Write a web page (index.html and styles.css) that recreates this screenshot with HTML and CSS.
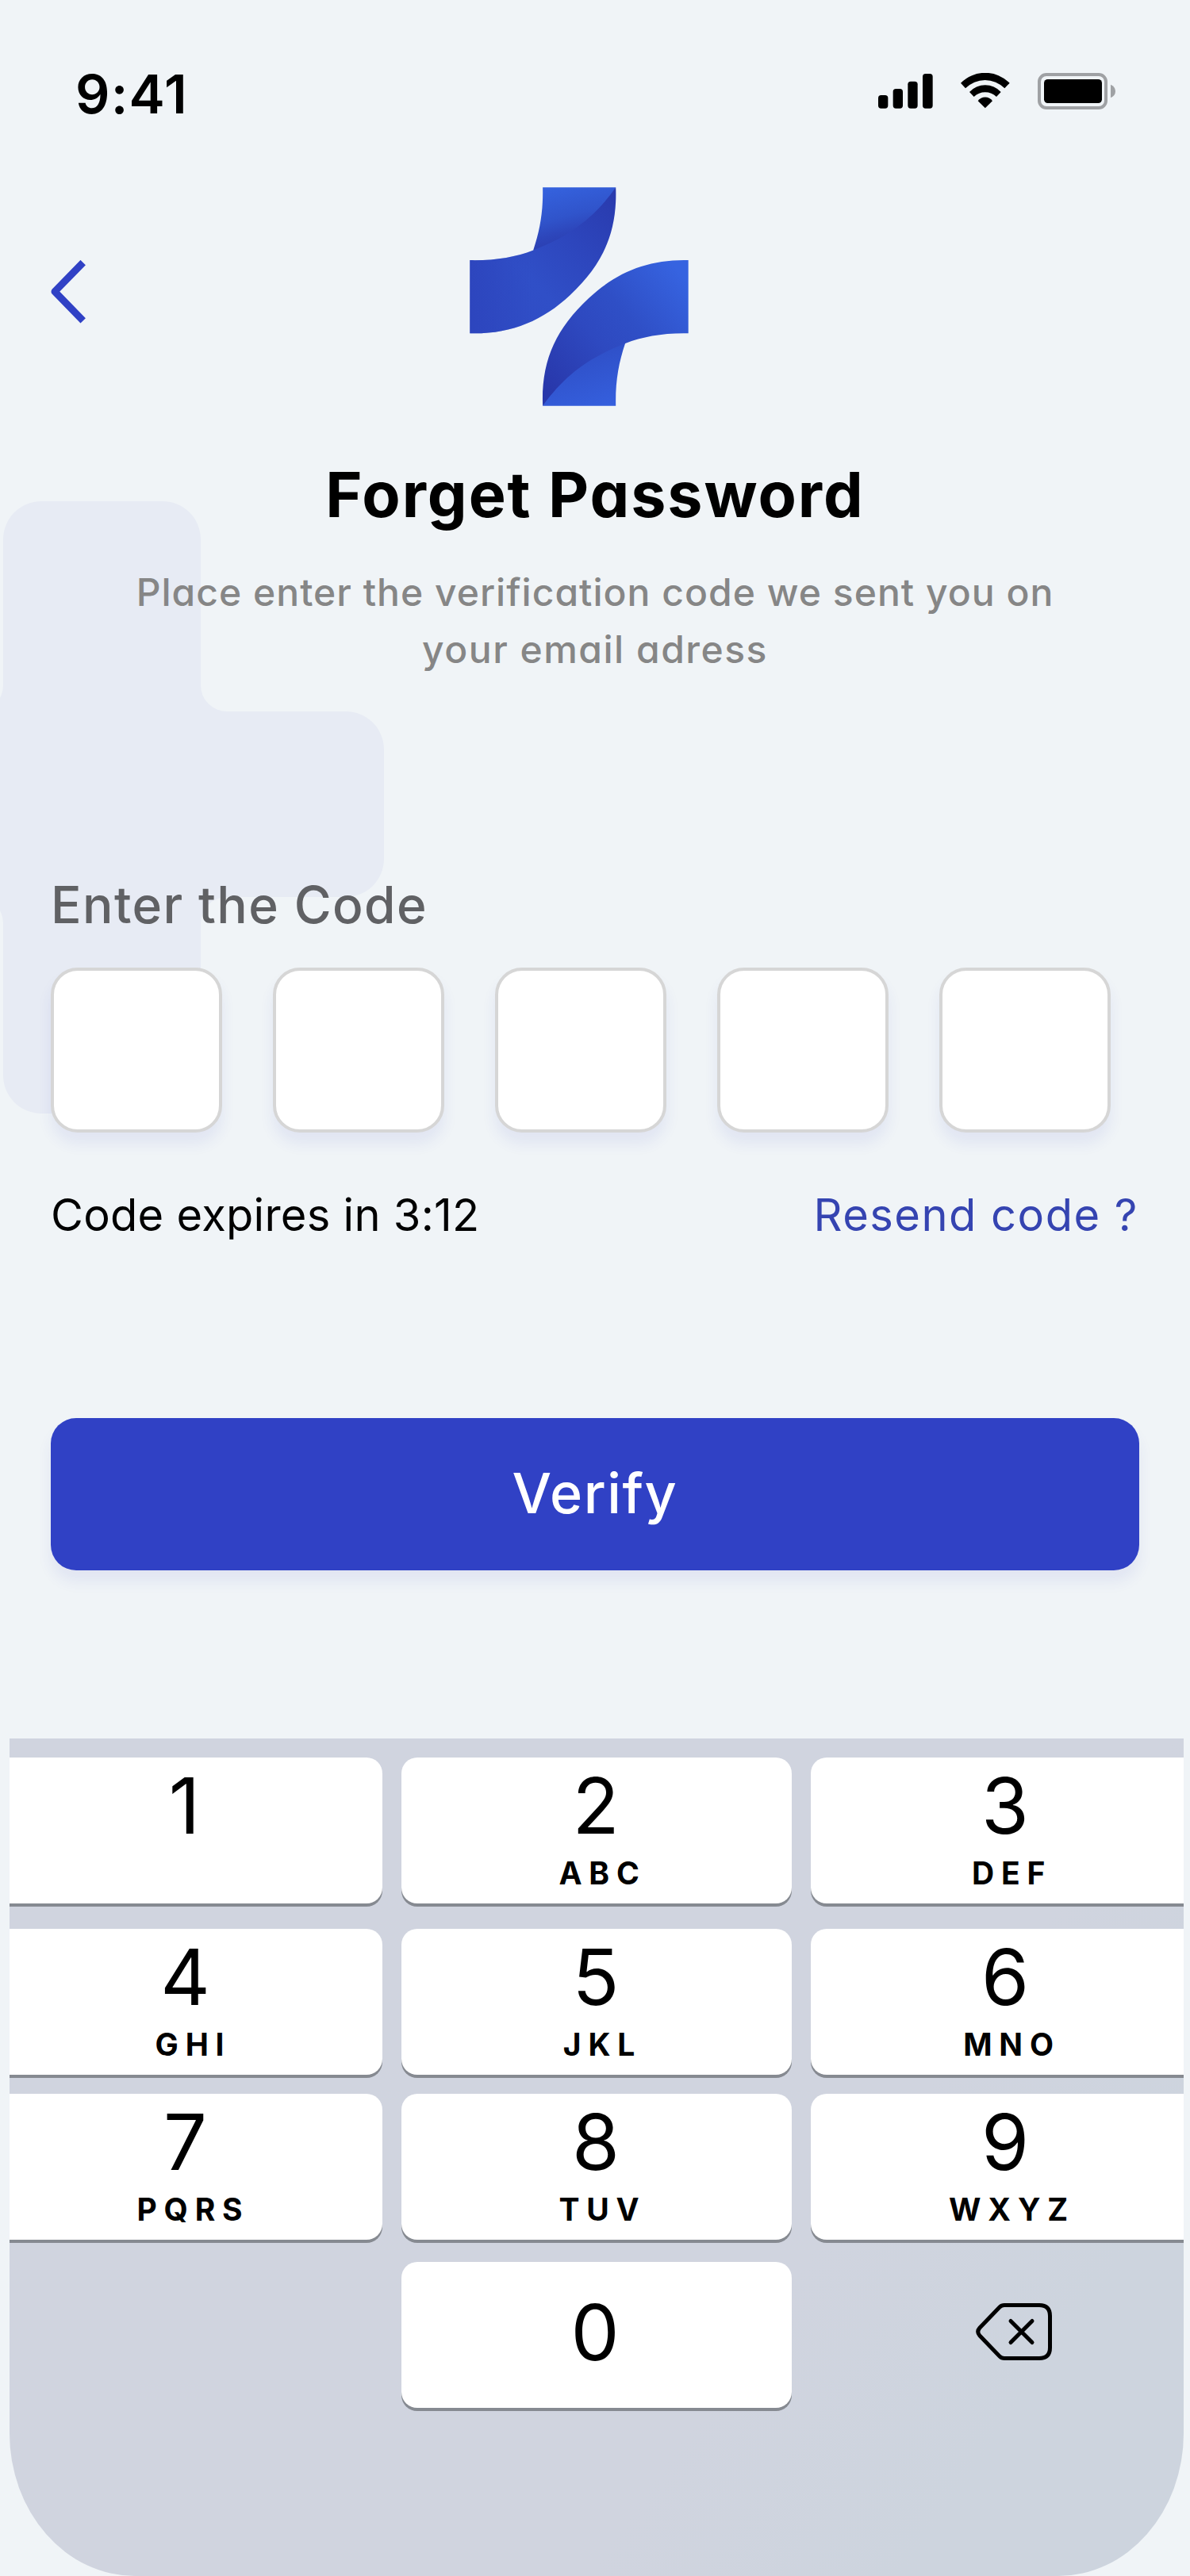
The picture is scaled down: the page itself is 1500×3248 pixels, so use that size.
FILE: index.html
```html
<!DOCTYPE html>
<html lang="en">
<head>
<meta charset="utf-8">
<title>Forget Password</title>
<link rel="stylesheet" href="styles.css">
</head>
<body>
<main class="screen">
  <svg class="backdrop" viewBox="0 0 484 772" aria-hidden="true">
    <path d="M52 0H205A48 48 0 0 1 253 48V232A33 33 0 0 0 286 265H436A48 48 0 0 1 484 313V451A48 48 0 0 1 436 499H286A33 33 0 0 0 253 532V724A48 48 0 0 1 205 772H52A48 48 0 0 1 4 724V532A33 33 0 0 0 -29 499V265A33 33 0 0 0 4 232V48A48 48 0 0 1 52 0Z"/>
  </svg>

  <div class="status">
    <span class="time">9:41</span>
    <svg class="status-icons" viewBox="81 66 897 138" aria-hidden="true">
      <rect x="81" y="150" width="37" height="50" rx="11"/>
      <rect x="137" y="126" width="37" height="74" rx="11"/>
      <rect x="193" y="98" width="37" height="102" rx="11"/>
      <rect x="249" y="69" width="38" height="131" rx="11"/>
      <path d="M393 104A130 130 0 0 1 578 104L559 124A104 104 0 0 0 411 124Z"/>
      <path d="M426 138A81 81 0 0 1 545 138L528 156A61.600 61.600 0 0 0 443 156Z"/>
      <path d="M458 172A33 33 0 0 1 513 172L485.500 199Z"/>
      <rect class="battery-frame" x="690" y="72" width="252" height="126" rx="27"/>
      <rect x="708" y="90" width="219" height="90" rx="14"/>
      <path class="battery-tip" d="M960 110Q978 118 978 135Q978 152 960 160Z"/>
    </svg>
  </div>

  <header class="header">
    <svg class="back" viewBox="0 0 48 80" role="img" aria-label="Back">
      <path d="M40.700 3L5 39.700L40.700 76.300"/>
    </svg>
    <svg class="logo" viewBox="96 79 827 827" role="img" aria-label="Logo">
      <defs>
        <linearGradient id="foldTop" gradientUnits="userSpaceOnUse" x1="400" y1="80" x2="450" y2="290">
          <stop offset="0" stop-color="#3562de"/><stop offset=".55" stop-color="#3054cb"/><stop offset=".82" stop-color="#2d46bb"/><stop offset="1" stop-color="#2b40b3"/>
        </linearGradient>
        <linearGradient id="bandTop" gradientUnits="userSpaceOnUse" x1="150" y1="600" x2="660" y2="110">
          <stop offset="0" stop-color="#2f4bc4"/><stop offset=".35" stop-color="#304fc7"/><stop offset=".65" stop-color="#2d46bd"/><stop offset="1" stop-color="#293aad"/>
        </linearGradient>
        <linearGradient id="bandEdge" gradientUnits="userSpaceOnUse" x1="97" y1="0" x2="330" y2="0">
          <stop offset="0" stop-color="#2c43bb" stop-opacity=".7"/><stop offset="1" stop-color="#2c43bb" stop-opacity="0"/>
        </linearGradient>
        <linearGradient id="bandLow" gradientUnits="userSpaceOnUse" x1="922" y1="440" x2="400" y2="870">
          <stop offset="0" stop-color="#3663e0"/><stop offset=".38" stop-color="#2f4fc6"/><stop offset=".6" stop-color="#2e49c0"/><stop offset="1" stop-color="#2837aa"/>
        </linearGradient>
        <linearGradient id="foldLow" gradientUnits="userSpaceOnUse" x1="620" y1="905" x2="560" y2="700">
          <stop offset="0" stop-color="#355fdd"/><stop offset="1" stop-color="#2f50c8"/>
        </linearGradient>
      </defs>
      <path fill="url(#foldTop)" d="M372 80H648C600 190 500 290 336 318C362 240 374 170 372 80Z"/>
      <path fill="url(#bandTop)" d="M97 355C190 357 270 343 336 317C480 262 570 190 648 80C654 250 600 370 475 487C370 585 250 635 97 631Z"/>
      <path fill="url(#bandEdge)" d="M97 355C190 357 270 343 336 317C480 262 570 190 648 80C654 250 600 370 475 487C370 585 250 635 97 631Z"/>
      <path fill="url(#foldLow)" d="M648 905H372C420 796 520 696 684 668C658 745 646 815 648 905Z"/>
      <path fill="url(#bandLow)" d="M922 631C829 629 750 643 684 669C540 724 450 796 372 905C366 736 420 616 545 499C650 401 770 351 922 355Z"/>
    </svg>
  </header>

  <section class="intro">
    <h1 class="title">Forget Password</h1>
    <p class="subtitle"><span class="line-first">Place enter the verification code we sent you on</span><br><span class="line-last">your email adress</span></p>
  </section>

  <section class="form">
    <h2 class="label">Enter the Code</h2>
    <div class="boxes">
      <div class="box"></div><div class="box"></div><div class="box"></div><div class="box"></div><div class="box"></div>
    </div>
    <div class="meta">
      <span class="expires">Code expires in 3:12</span>
      <a class="resend">Resend code ?</a>
    </div>
    <button class="verify" type="button">Verify</button>
  </section>

  <section class="keypad">
    <div class="keys">
      <div class="key left"><span class="digit one">1</span></div>
      <div class="key"><span class="digit">2</span><span class="letters">ABC</span></div>
      <div class="key"><span class="digit">3</span><span class="letters">DEF</span></div>
      <div class="key left"><span class="digit">4</span><span class="letters">GHI</span></div>
      <div class="key"><span class="digit">5</span><span class="letters">JKL</span></div>
      <div class="key"><span class="digit">6</span><span class="letters">MNO</span></div>
      <div class="key left"><span class="digit">7</span><span class="letters">PQRS</span></div>
      <div class="key"><span class="digit">8</span><span class="letters">TUV</span></div>
      <div class="key"><span class="digit">9</span><span class="letters">WXYZ</span></div>
      <div class="key zero"><span class="digit">0</span></div>
      <div class="erase">
        <svg class="erase-icon" viewBox="0 0 98 74" role="img" aria-label="Delete">
          <path d="M37 3.500H81Q94.500 3.500 94.500 17V57Q94.500 70.500 81 70.500H37Q33.500 70.500 31 68L6 42Q1.500 37 6 32L31 6Q33.500 3.500 37 3.500Z"/>
          <path d="M45 23.500L72 50.500M72 23.500L45 50.500"/>
        </svg>
      </div>
    </div>
  </section>
</main>
</body>
</html>
```
FILE: styles.css
```css
* { box-sizing: border-box; margin: 0; padding: 0; }

body {
  width: 1500px;
  background: #f0f4f7;
  color: #000;
  font-family: Inter, "Liberation Sans", sans-serif;
}

.screen {
  position: relative;
  display: flex;
  flex-direction: column;
  width: 1500px;
  height: 3248px;
  overflow: hidden;
}

.screen > * { position: relative; flex: none; }

.screen > .backdrop {
  position: absolute;
  top: 632px;
  left: 0;
  width: 484px;
  height: 772px;
  fill: #e7ebf4;
}

/* Status bar */
.status {
  display: flex;
  justify-content: space-between;
  height: 236px;
  padding: 78px 94px 0 95px;
}
.time { font-size: 68px; line-height: 80px; font-weight: 600; letter-spacing: 1.2px; }
.status-icons { width: 299px; height: 46px; margin-top: 14px; }
.battery-frame { fill: none; stroke: #9fa1a4; stroke-width: 12px; }
.battery-tip { fill: #9fa1a4; }

/* Header */
.header { display: flex; height: 276px; padding-left: 64px; }
.back {
  width: 48px;
  height: 80px;
  margin: 92px 480px 0 0;
  fill: none;
  stroke: #3041c5;
  stroke-width: 9px;
  stroke-linejoin: round;
}
.logo { width: 276px; height: 276px; }

/* Intro */
.intro {
  height: 581px;
  padding-top: 51px;
  text-align: center;
  font-feature-settings: "cv11";
}
.title { font-size: 79px; line-height: 120px; font-weight: 650; letter-spacing: 1.9px; }
.subtitle {
  margin-top: 28px;
  font-size: 48px;
  line-height: 72px;
  font-weight: 500;
  color: #868686;
}
.line-first { letter-spacing: 1.02px; }
.line-last { letter-spacing: 1.5px; }

/* Form */
.form {
  height: 1099px;
  padding: 0 64px;
  font-feature-settings: "cv11";
}
.label {
  font-size: 64px;
  line-height: 96px;
  font-weight: 500;
  letter-spacing: 1.4px;
  color: #606164;
}
.boxes { display: flex; gap: 64px; margin-top: 31px; }
.box {
  width: 216px;
  height: 208px;
  border: 4px solid #d6d6d6;
  border-radius: 34px;
  background: #fff;
  box-shadow: 0 14px 18px rgba(48, 65, 197, .08);
}
.meta {
  display: flex;
  justify-content: space-between;
  margin-top: 62px;
  font-size: 56px;
  line-height: 84px;
}
.expires { letter-spacing: .27px; }
.resend { padding-right: 1px; letter-spacing: 1.5px; color: #3544b1; }
.verify {
  display: block;
  width: 1372px;
  height: 192px;
  margin-top: 214px;
  padding-bottom: 3px;
  border: 0;
  border-radius: 32px;
  background: #3041c5;
  box-shadow: 0 14px 18px rgba(48, 65, 197, .08);
  color: #fff;
  font: 500 70px/96px Inter, "Liberation Sans", sans-serif;
  letter-spacing: 1.6px;
}

/* Keypad */
.keypad {
  width: 1480px;
  height: 1056px;
  margin-left: 12px;
  padding-top: 24px;
  overflow: hidden;
  border-radius: 0 0 158px 158px / 0 0 180px 180px;
  background: linear-gradient(125deg, #d0d4df 66%, #cdd4de 84%);
}
.keys {
  display: grid;
  grid-template-columns: repeat(3, 492px);
  grid-template-rows: 216px 208px 212px 184px;
  column-gap: 24px;
  margin-left: -22px;
}
.key {
  display: flex;
  flex-direction: column;
  align-items: center;
  height: 184px;
  border-radius: 20px;
  background: #fff;
  box-shadow: 0 4px 0 #868a91;
}
.digit {
  height: 122px;
  padding: 11px 2px 0 0;
  font-size: 97px;
  line-height: 100px;
}
.left .digit { padding-right: 5px; }
.left .one { padding-right: 7px; }
.letters {
  padding-left: 15px;
  font-size: 39px;
  line-height: 48px;
  font-weight: 700;
  letter-spacing: 8.8px;
}
.zero { grid-column: 2; justify-content: center; }
.zero .digit { height: 100px; padding: 0 4px 0 0; margin-top: -6px; }
.erase { display: flex; align-items: center; padding-left: 207px; }
.erase-icon {
  width: 98px;
  height: 74px;
  margin-top: -8px;
  fill: none;
  stroke: #000;
  stroke-width: 5px;
  stroke-linecap: round;
  stroke-linejoin: round;
}
```
